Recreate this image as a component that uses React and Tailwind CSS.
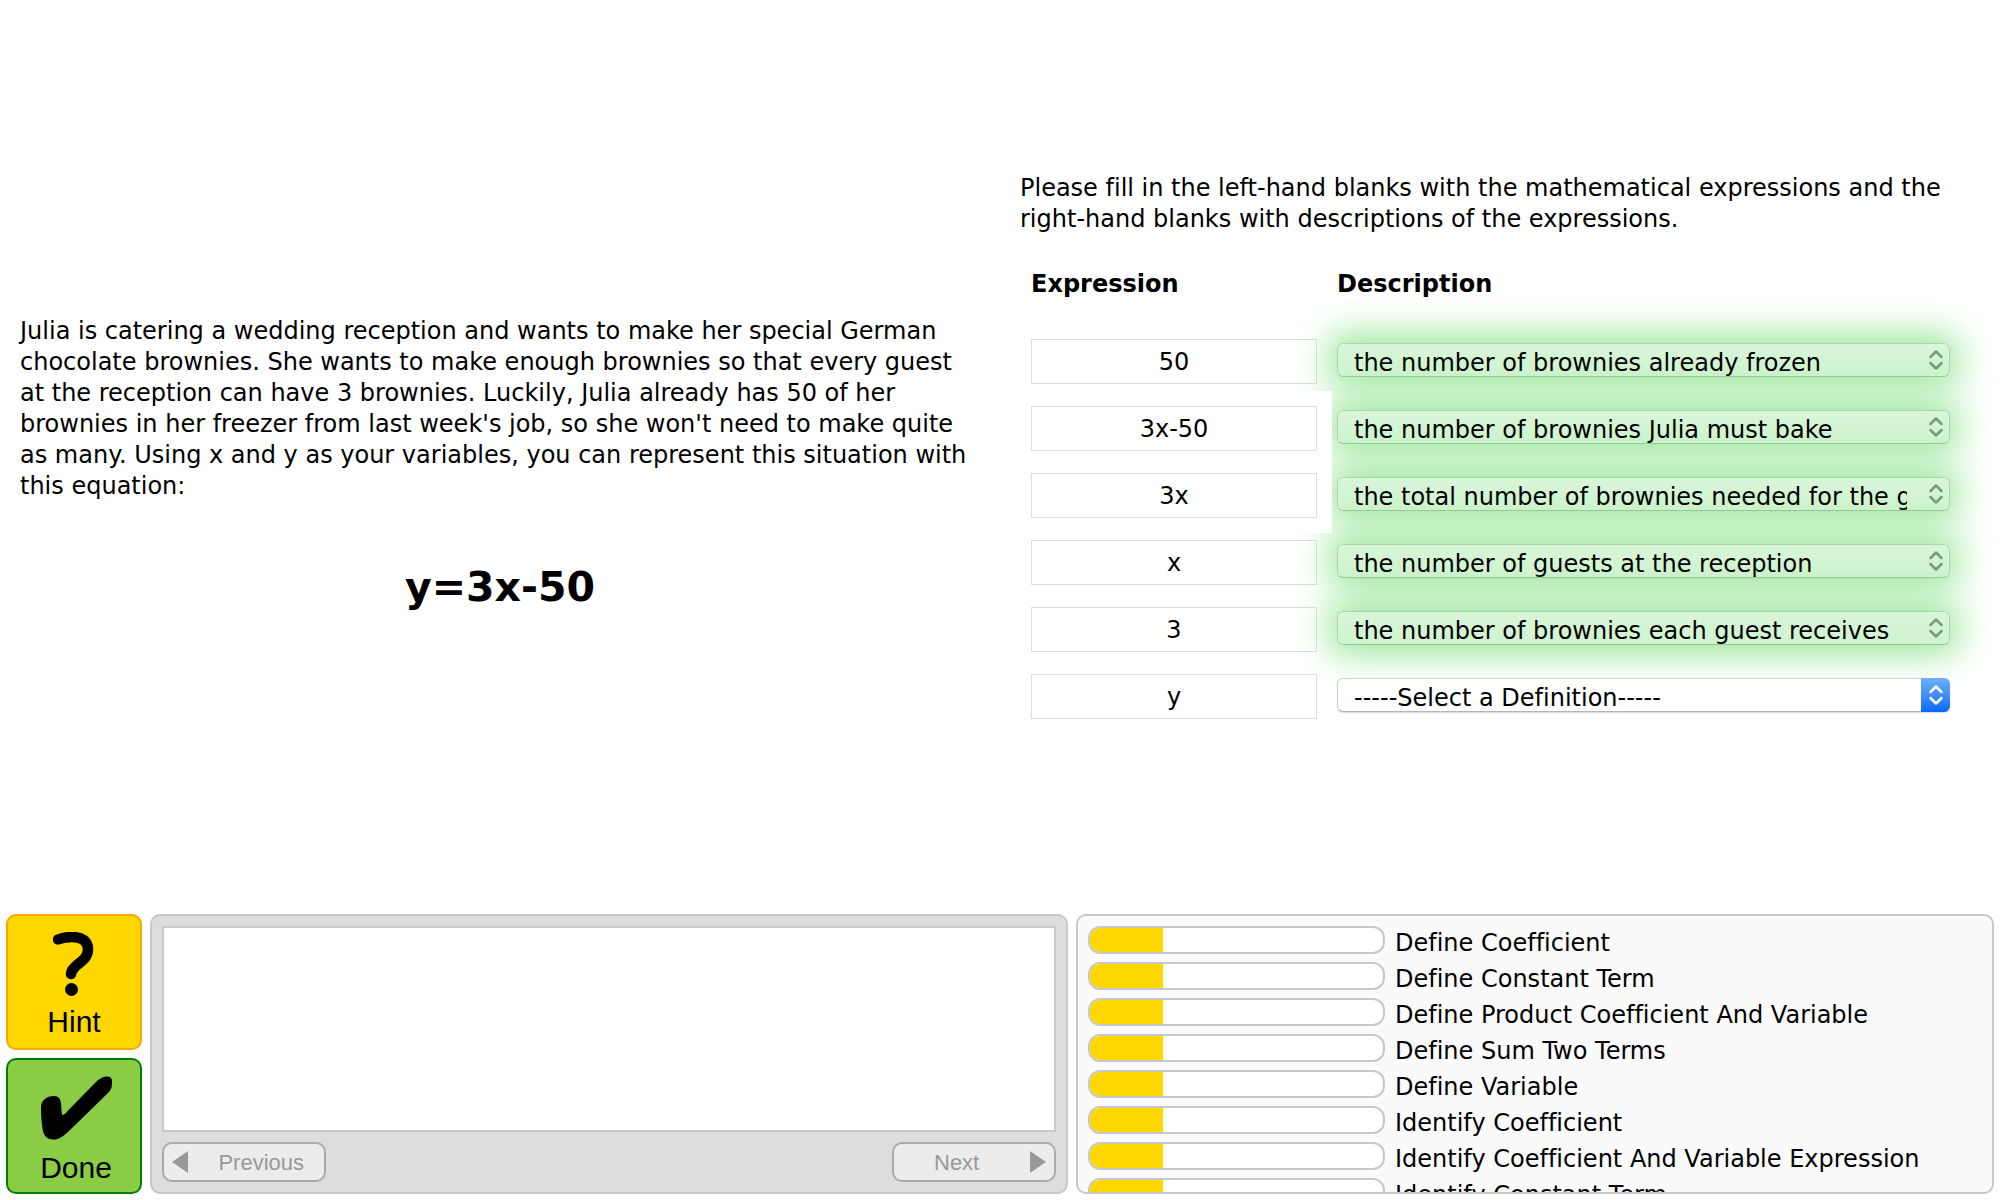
const rows = [
  { id: "r1", expression: "50", description: "the number of brownies already frozen", correct: true },
  { id: "r2", expression: "3x-50", description: "the number of brownies Julia must bake", correct: true, raised: true },
  { id: "r3", expression: "3x", description: "the total number of brownies needed for the guests", correct: true, raised: true },
  { id: "r4", expression: "x", description: "the number of guests at the reception", correct: true },
  { id: "r5", expression: "3", description: "the number of brownies each guest receives", correct: true },
  { id: "r6", expression: "y", description: "-----Select a Definition-----", correct: false },
];

const skills = [
  "Define Coefficient",
  "Define Constant Term",
  "Define Product Coefficient And Variable",
  "Define Sum Two Terms",
  "Define Variable",
  "Identify Coefficient",
  "Identify Coefficient And Variable Expression",
  "Identify Constant Term",
];

function Chevrons({ className }) {
  return (
    <svg viewBox="0 0 14 20" className={className} fill="none" stroke="currentColor" strokeWidth="2.500" strokeLinecap="round" strokeLinejoin="round" aria-hidden="true">
      <path d="M1.500 7 L7 1.500 L12.500 7 M1.500 13 L7 18.500 L12.500 13" />
    </svg>
  );
}

function ExpressionRow({ row, index }) {
  return (
    <tr>
      <td className="h-[67px] w-[306px] p-0 pr-5 align-middle">
        <input
          type="text"
          aria-label={"Expression " + (index + 1)}
          defaultValue={row.expression}
          className={
            "block h-[45px] w-full border border-[#dddddd] pt-0.5 text-center outline-none " +
            (row.raised ? "relative z-10 bg-white shadow-[0_0_0_15px_#ffffff]" : "bg-transparent")
          }
        />
      </td>
      <td className="p-0 align-middle">
        <div
          className={
            "relative -mt-0.5 h-[34px] rounded-md " +
            (row.correct ? "shadow-[0_0_36px_8px_#92e592]" : "shadow-[0_1px_1px_rgba(0,0,0,0.15)]")
          }
        >
          <select
            aria-label={"Description " + (index + 1)}
            defaultValue={row.description}
            className={
              "block h-[34px] w-full appearance-none rounded-md border pt-1 pr-[42px] pl-4 outline-none " +
              (row.correct
                ? "border-[#a8d8a8] border-b-[#98c898] bg-linear-to-b from-[#d8f6d8] to-[#cff3cf]"
                : "border-[#cfcfcf] border-b-[#b5b5b5] bg-white")
            }
          >
            <option>{row.description}</option>
          </select>
          <span
            className={
              "pointer-events-none absolute inset-y-0 right-0 flex w-[29px] items-center justify-center rounded-r-md " +
              (row.correct ? "text-[#779a77]" : "bg-linear-to-b from-[#6cb0fb] to-[#0567fb] text-white")
            }
          >
            <Chevrons className="h-5 w-3.5" />
          </span>
        </div>
      </td>
    </tr>
  );
}

export default function App() {
  return (
    <main className="flex min-h-screen flex-col bg-white font-['DejaVu_Sans',sans-serif] text-2xl leading-[31px] text-black [font-variant-ligatures:none]">
      <div className="grid flex-1 grid-cols-2 items-center">
        <section className="px-5 pt-3.5">
          <p>
            Julia is catering a wedding reception and wants to make her special German chocolate brownies. She wants to
            make enough brownies so that every guest at the reception can have 3 brownies. Luckily, Julia already has 50
            of her brownies in her freezer from last week's job, so she won't need to make quite as many. Using x and y
            as your variables, you can represent this situation with this equation:
          </p>
          <h1 className="mt-15 text-center text-[41px] leading-[50px] font-bold">y=3x-50</h1>
        </section>

        <section className="px-5 pb-3">
          <p>
            Please fill in the left-hand blanks with the mathematical expressions and the right-hand blanks with
            descriptions of the expressions.
          </p>
          <div className="pt-[34px] pr-[30px] pl-[11px]">
            <table className="w-full border-collapse">
              <thead>
                <tr className="text-left">
                  <th className="pb-7 font-bold">Expression</th>
                  <th className="pb-7 font-bold">Description</th>
                </tr>
              </thead>
              <tbody>
                {rows.map((row, i) => (
                  <ExpressionRow key={row.id} row={row} index={i} />
                ))}
              </tbody>
            </table>
          </div>
        </section>
      </div>

      <footer className="flex gap-2 px-1.5 pb-1.5">
        <div className="flex w-[136px] flex-col gap-2 font-['Liberation_Sans',sans-serif] text-3xl">
          <button className="flex h-[136px] flex-col items-center rounded-[10px] border-2 border-[#ffa500] bg-[#ffd700] pt-4">
            <svg viewBox="0 0 42 64" className="h-16 w-[42px]" aria-hidden="true">
              <path
                d="M5 7.500 C10 5.500 15 5 19 5 C29 5 35 9 35 17 C35 25 30 28 24 33 C20 37 18.500 38 18 42"
                fill="none"
                stroke="#000"
                strokeWidth="10.500"
                strokeLinecap="round"
              />
              <circle cx="18.500" cy="57.500" r="6.500" />
            </svg>
            <span className="mt-2">Hint</span>
          </button>
          <button className="flex h-[136px] flex-col items-center rounded-[10px] border-2 border-[#008000] bg-[#8acd45] pt-4 pl-1">
            <svg viewBox="0 0 72 64" className="h-16 w-[72px]" aria-hidden="true">
              <path d="M1 30 C2 23 8 20 14 20 C24 20 20 34 22.500 39 C24 39 26 37 28 34.500 L57 5 C62 0 72 -2 72 5 C72 10 72 13 68 17 L30 54 C22 62 17 64 13 63.500 C7 63 4 60 3 55 C1.500 47 1 37 1 30 Z" />
            </svg>
            <span className="mt-2.5">Done</span>
          </button>
        </div>

        <section className="flex min-w-0 flex-1 flex-col gap-2.5 rounded-[10px] border-2 border-[#c8c8c8] bg-[#dddddd] p-2.5 font-['Liberation_Sans',sans-serif] text-[22px]">
          <div className="flex-1 border-2 border-[#c8c8c8] bg-white" />
          <div className="flex justify-between">
            <button className="flex h-10 w-[164px] items-center justify-between rounded-[10px] border-2 border-[#aaaaaa] bg-[#ececec] pr-5 pl-2 text-[#999999]">
              <svg viewBox="0 0 16 22" className="h-[22px] w-4" fill="currentColor" aria-hidden="true">
                <path d="M16 0 V22 L0 11 Z" />
              </svg>
              Previous
            </button>
            <button className="flex h-10 w-[164px] items-center justify-between rounded-[10px] border-2 border-[#aaaaaa] bg-[#ececec] pr-2 pl-10 text-[#999999]">
              Next
              <svg viewBox="0 0 16 22" className="h-[22px] w-4" fill="currentColor" aria-hidden="true">
                <path d="M0 0 V22 L16 11 Z" />
              </svg>
            </button>
          </div>
        </section>

        <section className="h-[280px] min-w-0 flex-1 overflow-hidden rounded-[10px] border-2 border-[#c8c8c8] bg-[#fafafa] px-2.5 pt-2.5">
          <ul className="flex flex-col gap-2">
            {skills.map((skill) => (
              <li key={skill} className="flex h-7 items-center gap-2.5">
                <div className="h-7 w-[297px] shrink-0 overflow-hidden rounded-xl border-2 border-[#c8c8c8] bg-white">
                  <div className="h-full w-1/4 bg-[#ffd700]" />
                </div>
                <span className="pt-1.5 whitespace-nowrap">{skill}</span>
              </li>
            ))}
          </ul>
        </section>
      </footer>
    </main>
  );
}
